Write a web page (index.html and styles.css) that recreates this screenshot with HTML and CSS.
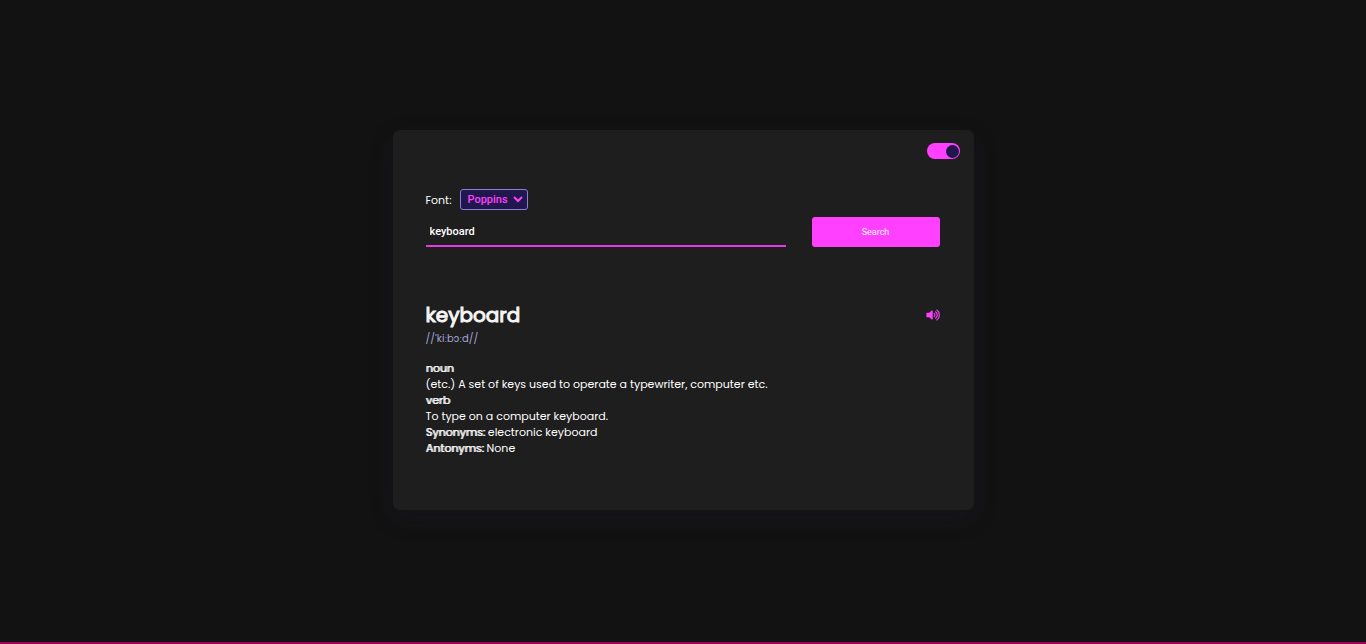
FILE: index.html
```
<!DOCTYPE html>
<html lang="en">
<head>
<meta charset="utf-8">
<meta name="viewport" content="width=device-width, initial-scale=1">
<title>Dictionary</title>
<link rel="stylesheet" href="styles.css">
</head>
<body>
<main class="card">
  <div class="theme">
    <input class="switch" type="checkbox" role="switch" aria-label="Dark mode" checked>
  </div>
  <div class="content">
    <div class="font-row">
      <label for="font">Font:</label>
      <span class="select-wrap">
        <select id="font" class="font-select">
          <option>Poppins</option>
          <option>Serif</option>
          <option>Mono</option>
        </select>
        <svg class="chevron" viewBox="0 0 10 7" aria-hidden="true"><path d="M1 1l4 4 4-4"/></svg>
      </span>
    </div>
    <form class="search">
      <input class="search-input" type="text" value="keyboard" aria-label="Word">
      <button class="search-button" type="button">Search</button>
    </form>
    <section class="result">
      <div class="word-row">
        <h1 class="word">keyboard</h1>
        <button class="sound" type="button" aria-label="Play pronunciation">
          <svg class="sound-icon" viewBox="0 0 600 512" aria-hidden="true"><path d="M40 156h100L248 62c15-14 40-5 40 18v352c0 23-25 32-40 18L140 356H40c-14 0-24-10-24-24V180c0-14 10-24 24-24z"/><path class="wave" d="M352 190c42 24 42 108 0 132M410 116c95 62 95 218 0 280M464 44c144 94 144 330 0 424"/></svg>
        </button>
      </div>
      <p class="phonetic">//ˈkiːbɔːd//</p>
      <div class="meanings">
        <p><strong>noun</strong></p>
        <p>(etc.) A set of keys used to operate a typewriter, computer etc.</p>
        <p><strong>verb</strong></p>
        <p>To type on a computer keyboard.</p>
        <p><strong>Synonyms:</strong> electronic keyboard</p>
        <p><strong>Antonyms:</strong> None</p>
      </div>
    </section>
  </div>
</main>
<footer class="footer-line"></footer>
</body>
</html>
```
FILE: styles.css
```
* { box-sizing: border-box; }

body {
  margin: 0;
  min-height: 100vh;
  display: flex;
  flex-direction: column;
  background: #121212;
  color: #fff;
  font-family: Poppins, Inter, sans-serif;
  font-size: 11px;
  line-height: 16px;
}

p, h1 { margin: 0; }

.card {
  width: calc(100% - 32px);
  max-width: 581px;
  margin: auto;
  padding: 13px 14px 54px 33px;
  border-radius: 7px;
  background: #1e1e1e;
  box-shadow: 0 8px 24px rgba(38, 34, 70, 0.2);
}

.theme {
  display: flex;
  justify-content: flex-end;
}

.switch {
  appearance: none;
  display: flex;
  justify-content: flex-end;
  align-items: center;
  width: 33px;
  height: 16px;
  margin: 0;
  padding: 1px;
  border-radius: 8px;
  background: #ff40ff;
}

.switch::before {
  content: "";
  width: 13px;
  height: 13px;
  border-radius: 50%;
  background: #20184c;
}

.content { padding: 30px 20px 0 0; }

.font-row {
  display: flex;
  align-items: center;
  gap: 9px;
}

.select-wrap {
  position: relative;
  display: flex;
}

.font-select {
  appearance: none;
  width: 68px;
  height: 21px;
  padding: 0 6px;
  border: 1px solid #8b7bdc;
  border-radius: 3px;
  background: #20184c;
  color: #ff40ff;
  font: 500 11px Roboto, sans-serif;
}

.chevron {
  position: absolute;
  top: 7px;
  right: 5px;
  width: 10px;
  height: 7px;
  fill: none;
  stroke: #ff40ff;
  stroke-width: 2;
  pointer-events: none;
}

.search {
  display: flex;
  gap: 26px;
  margin-top: 7px;
}

.search-input {
  flex: 1;
  min-width: 0;
  height: 30px;
  padding: 0 4px;
  border: 0;
  border-bottom: 2px solid #e13ce1;
  background: none;
  color: #fff;
  font: 500 11px Roboto, sans-serif;
}

.search-button {
  width: 128px;
  height: 30px;
  padding: 0;
  border: 0;
  border-radius: 3px;
  background: #ff40ff;
  color: #fff;
  font: 9px Roboto, sans-serif;
}

.result { margin-top: 52px; }

.word-row {
  display: flex;
  justify-content: space-between;
  align-items: center;
}

.word {
  font-size: 20px;
  font-weight: 400;
  line-height: 32px;
  color: #f5f5f5;
  -webkit-text-stroke: 1px #f5f5f5;
}

.sound {
  display: flex;
  padding: 0;
  border: 0;
  background: none;
}

.sound-icon {
  width: 14px;
  height: 12px;
  fill: #ff40ff;
}

.wave {
  fill: none;
  stroke: #ff40ff;
  stroke-width: 48;
  stroke-linecap: round;
}

.phonetic {
  color: #a5a5d8;
  font-size: 10px;
}

.meanings { margin-top: 13px; }

.meanings strong {
  font-weight: 400;
  color: #f0f0f0;
  text-shadow: 1px 0 currentColor;
}

.footer-line {
  height: 2px;
  margin-top: 2px;
  background: #99005c;
}
```
